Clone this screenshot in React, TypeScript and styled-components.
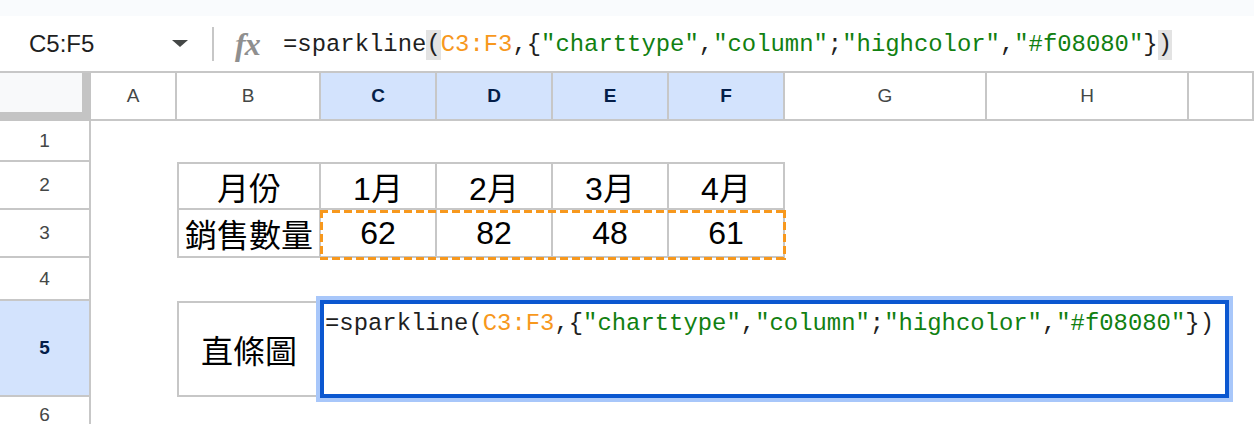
import React from "react";
import styled, { createGlobalStyle } from "styled-components";

const GlobalStyle = createGlobalStyle`
  html, body {
    margin: 0;
    padding: 0;
    background: #ffffff;
  }
  body {
    font-family: "Liberation Sans", "Noto Sans CJK TC", Arial, sans-serif;
  }
`;

const Page = styled.div`
  width: 1254px;
  height: 424px;
  overflow: hidden;
  display: flex;
  flex-direction: column;
`;

const TopStrip = styled.div`
  flex: none;
  height: 16px;
  background: #f9fbfd;
`;

const FormulaBar = styled.div`
  flex: none;
  height: 57px;
  box-sizing: border-box;
  border-bottom: 2px solid #c7c7c7;
  display: flex;
  align-items: center;
`;

const NameBox = styled.div`
  width: 200px;
  box-sizing: border-box;
  padding: 0 12px 0 29px;
  display: flex;
  align-items: center;
  justify-content: space-between;
  font-size: 24px;
  color: #1f1f1f;
`;

const Caret = styled.span`
  width: 0;
  height: 0;
  border-left: 8px solid transparent;
  border-right: 8px solid transparent;
  border-top: 7px solid #444746;
`;

const Divider = styled.div`
  width: 2px;
  height: 34px;
  margin-left: 12px;
  background: #c7c7c7;
`;

const FxIcon = styled.span`
  width: 30px;
  margin-left: 21px;
  font-family: "Liberation Serif", "DejaVu Serif", serif;
  font-style: italic;
  font-weight: bold;
  font-size: 32px;
  line-height: 32px;
  color: #8f8f8f;
  letter-spacing: -1px;
`;

const FormulaLine = styled.div<{ $pad?: string }>`
  font-family: "Liberation Mono", "DejaVu Sans Mono", monospace;
  font-size: 23.9px;
  line-height: 30px;
  color: #1f1f1f;
  white-space: nowrap;
  padding: ${(p) => p.$pad || "0"};
`;

const Paren = styled.span<{ $match?: boolean }>`
  display: inline-block;
  background: ${(p) => (p.$match ? "#e3e3e3" : "transparent")};
`;

const RefText = styled.span`
  color: #f7981d;
`;

const StrText = styled.span`
  color: #118011;
`;

const Grid = styled.div`
  flex: none;
  display: grid;
  grid-template-columns: 91px 86px 144px 116px 116px 116px 116px 202px 202px 1fr;
  grid-template-rows: 48px 41px 48px 48px 43px 96px 27px;
`;

const Corner = styled.div`
  grid-row: 1;
  grid-column: 1;
  box-sizing: border-box;
  background: #f8f9fa;
  border-right: 9px solid #c4c4c4;
  border-bottom: 9px solid #c4c4c4;
`;

const ColHeader = styled.div<{ $col: number; $selected?: boolean }>`
  grid-row: 1;
  grid-column: ${(p) => p.$col};
  box-sizing: border-box;
  border-right: 2px solid #c7c7c7;
  border-bottom: 2px solid #c7c7c7;
  background: ${(p) => (p.$selected ? "#d3e3fd" : "#ffffff")};
  color: ${(p) => (p.$selected ? "#041e49" : "#444746")};
  font-weight: ${(p) => (p.$selected ? "bold" : "normal")};
  font-size: 19px;
  display: flex;
  align-items: center;
  justify-content: center;
`;

const RowHeader = styled.div<{ $row: number; $selected?: boolean; $last?: boolean }>`
  grid-row: ${(p) => p.$row};
  grid-column: 1;
  box-sizing: border-box;
  border-right: 2px solid #c7c7c7;
  border-bottom: ${(p) => (p.$last ? "none" : "2px solid #c7c7c7")};
  padding-top: ${(p) => (p.$last ? "8px" : "0")};
  background: ${(p) => (p.$selected ? "#d3e3fd" : "#ffffff")};
  color: ${(p) => (p.$selected ? "#041e49" : "#444746")};
  font-weight: ${(p) => (p.$selected ? "bold" : "normal")};
  font-size: 19px;
  display: flex;
  align-items: center;
  justify-content: center;
`;

const Cell = styled.div<{
  $row: number;
  $col: number;
  $left?: boolean;
  $top?: boolean;
}>`
  grid-row: ${(p) => p.$row};
  grid-column: ${(p) => p.$col};
  box-sizing: border-box;
  border-right: 2px solid #c7c7c7;
  border-bottom: 2px solid #c7c7c7;
  border-left: ${(p) => (p.$left ? "2px solid #c7c7c7" : "none")};
  border-top: ${(p) => (p.$top ? "2px solid #c7c7c7" : "none")};
  font-size: 32px;
  color: #000000;
  display: flex;
  align-items: center;
  justify-content: center;
  white-space: nowrap;
`;

// copy-range marquee over C3:F3
const Marquee = styled.div`
  grid-row: 4;
  grid-column: 4 / 8;
  margin: 0 -1px -2px -1px;
  pointer-events: none;
  background:
    linear-gradient(90deg, #f7981d 8px, transparent 8px) top left / 12px 3px repeat-x,
    linear-gradient(90deg, #f7981d 8px, transparent 8px) bottom left / 12px 3px repeat-x,
    linear-gradient(180deg, #f7981d 8px, transparent 8px) top left / 3px 12px repeat-y,
    linear-gradient(180deg, #f7981d 8px, transparent 8px) top right / 3px 12px repeat-y;
`;

// in-cell editor for the merged C5:F5
const Editor = styled.div`
  grid-row: 6;
  grid-column: 4 / -1;
  justify-self: start;
  width: 909px;
  margin: -1px 0 -1px -1px;
  box-sizing: border-box;
  border: 4px solid #0b57d0;
  box-shadow: 0 0 0 4px #a8c7fa;
  background: #ffffff;
`;

type Token = { text: string; kind?: "ref" | "str" | "paren" };

const tokens: Token[] = [
  { text: "=sparkline" },
  { text: "(", kind: "paren" },
  { text: "C3:F3", kind: "ref" },
  { text: ",{" },
  { text: '"charttype"', kind: "str" },
  { text: "," },
  { text: '"column"', kind: "str" },
  { text: ";" },
  { text: '"highcolor"', kind: "str" },
  { text: "," },
  { text: '"#f08080"', kind: "str" },
  { text: "}" },
  { text: ")", kind: "paren" },
];

const Formula: React.FC<{ matchParens?: boolean }> = ({ matchParens }) => (
  <>
    {tokens.map((t, i) => {
      if (t.kind === "ref") return <RefText key={i}>{t.text}</RefText>;
      if (t.kind === "str") return <StrText key={i}>{t.text}</StrText>;
      if (t.kind === "paren")
        return (
          <Paren key={i} $match={matchParens}>
            {t.text}
          </Paren>
        );
      return <span key={i}>{t.text}</span>;
    })}
  </>
);

const columns = ["A", "B", "C", "D", "E", "F", "G", "H", ""];
const selectedCols = ["C", "D", "E", "F"];
const rows = [1, 2, 3, 4, 5, 6];

const table = [
  { row: 2, cells: ["月份", "1月", "2月", "3月", "4月"] },
  { row: 3, cells: ["銷售數量", "62", "82", "48", "61"] },
];

export default function App() {
  return (
    <>
      <GlobalStyle />
      <Page>
        <TopStrip />
        <FormulaBar>
          <NameBox>
            <span>C5:F5</span>
            <Caret />
          </NameBox>
          <Divider />
          <FxIcon>fx</FxIcon>
          <FormulaLine $pad="2px 0 0 18px">
            <Formula matchParens />
          </FormulaLine>
        </FormulaBar>
        <Grid>
          <Corner />
          {columns.map((c, i) => (
            <ColHeader key={i} $col={i + 2} $selected={selectedCols.includes(c)}>
              {c}
            </ColHeader>
          ))}
          {rows.map((r) => (
            <RowHeader
              key={r}
              $row={r + 1}
              $selected={r === 5}
              $last={r === rows.length}
            >
              {r}
            </RowHeader>
          ))}
          {table.map((line) =>
            line.cells.map((text, i) => (
              <Cell
                key={`${line.row}-${i}`}
                $row={line.row + 1}
                $col={i + 3}
                $left={i === 0}
                $top={line.row === 2}
              >
                {text}
              </Cell>
            ))
          )}
          <Cell $row={6} $col={3} $left $top>
            直條圖
          </Cell>
          <Marquee />
          <Editor>
            <FormulaLine $pad="5px 0 0 1px">
              <Formula />
            </FormulaLine>
          </Editor>
        </Grid>
      </Page>
    </>
  );
}
